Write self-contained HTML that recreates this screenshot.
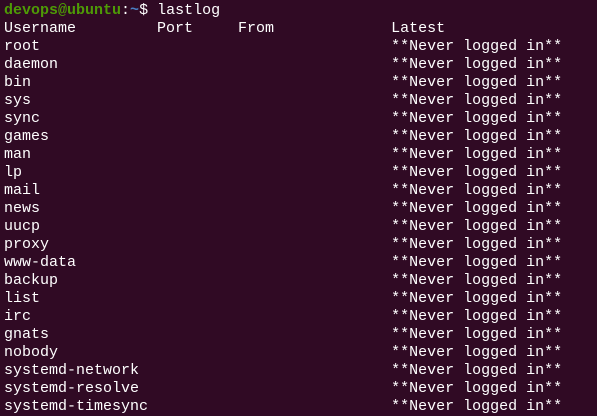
<!DOCTYPE html>
<html><head><style>
html,body{margin:0;padding:0;background:#300a24;width:597px;height:416px;overflow:hidden}
pre{margin:0;position:absolute;left:4px;top:2px;font-family:"Liberation Mono",monospace;font-size:15px;line-height:18px;color:#ffffff;letter-spacing:0}
.g{color:#4e9a06;font-weight:bold}.b{color:#4a7ec4;font-weight:bold}
</style></head><body>
<pre><span class="g">devops@ubuntu</span>:<span class="b">~</span>$ lastlog
Username         Port     From             Latest
root                                       **Never logged in**
daemon                                     **Never logged in**
bin                                        **Never logged in**
sys                                        **Never logged in**
sync                                       **Never logged in**
games                                      **Never logged in**
man                                        **Never logged in**
lp                                         **Never logged in**
mail                                       **Never logged in**
news                                       **Never logged in**
uucp                                       **Never logged in**
proxy                                      **Never logged in**
www-data                                   **Never logged in**
backup                                     **Never logged in**
list                                       **Never logged in**
irc                                        **Never logged in**
gnats                                      **Never logged in**
nobody                                     **Never logged in**
systemd-network                            **Never logged in**
systemd-resolve                            **Never logged in**
systemd-timesync                           **Never logged in**</pre>
</body></html>
